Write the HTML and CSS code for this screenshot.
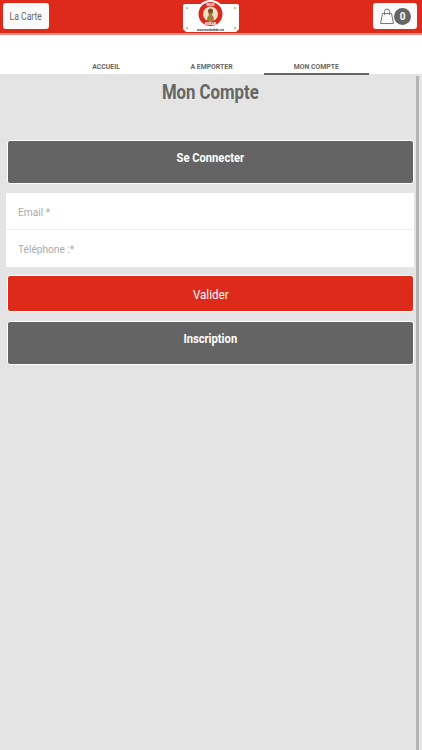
FILE: index.html
```html
<!DOCTYPE html>
<html lang="fr">
<head>
<meta charset="utf-8">
<title>Mon Compte</title>
<link rel="stylesheet" href="styles.css">
</head>
<body>
<header class="topbar">
  <a class="carte-btn"><span class="narrow">La Carte</span></a>
  <div class="logo">
    <svg width="58" height="33" viewBox="0 0 58 33">
      <path d="M3 4h52a2 2 0 0 1 2 2v23l-3 3H4l-3-3V6a2 2 0 0 1 2-2z" fill="#fff"/>
      <circle cx="28.500" cy="14" r="14" fill="#fff"/>
      <circle cx="28.500" cy="14" r="12" fill="#d9281c"/>
      <circle cx="28.500" cy="14" r="7.500" fill="#f1dfc4"/>
      <path d="M25 21c0-4 1-5 2-6-1-2 0-6 1.500-6s2.500 4 1.500 6c1 1 2 2 2 6z" fill="#a9783f"/>
      <circle cx="28.500" cy="11" r="2.500" fill="#7a5126"/>
      <text class="logo-ring" x="28.500" y="6" text-anchor="middle">MON</text>
      <text class="logo-ring" x="28.500" y="25" text-anchor="middle">KEBAB</text>
      <circle cx="5" cy="8" r="1" fill="#d8a040"/><circle cx="53" cy="8" r="1" fill="#d8a040"/>
      <circle cx="5" cy="28" r="1" fill="#d8a040"/><circle cx="53" cy="28" r="1" fill="#d8a040"/>
      <text class="logo-url" x="28.500" y="30.500" text-anchor="middle">www.monkebab.xxx</text>
    </svg>
  </div>
  <a class="cart-btn">
    <svg class="bag" width="14" height="16" viewBox="0 0 14 16" fill="none" stroke="#777" stroke-width="1">
      <path d="M2.500 5.500h9l2 10H.5z"/>
      <path d="M4.500 7V3.500a2.500 2.500 0 0 1 5 0V7"/>
    </svg>
    <span class="count">0</span>
  </a>
</header>
<nav class="tabs">
  <a class="tab"><span class="narrow">ACCUEIL</span></a>
  <a class="tab"><span class="narrow">A EMPORTER</span></a>
  <a class="tab tab-active"><span class="narrow">MON COMPTE</span></a>
</nav>
<main class="content">
  <h1 class="title"><span class="narrow">Mon Compte</span></h1>
  <div class="btn btn-grey btn-tall"><span class="narrow">Se Connecter</span></div>
  <form class="form">
    <div class="field"><span class="narrow">Email *</span></div>
    <div class="field field-last"><span class="narrow">Téléphone :*</span></div>
  </form>
  <div class="btn btn-red"><span class="narrow">Valider</span></div>
  <div class="btn btn-grey btn-tall"><span class="narrow">Inscription</span></div>
  <div class="scrollbar"></div>
</main>
</body>
</html>
```

FILE: styles.css
```css
html, body {
  margin: 0;
  height: 100%;
}
body {
  width: 422px;
  height: 750px;
  overflow: hidden;
  background: #e4e4e4;
  font-family: Roboto, "Liberation Sans", sans-serif;
  display: flex;
  flex-direction: column;
}
.narrow {
  display: inline-block;
  transform: scaleX(0.86);
}
.field .narrow {
  transform-origin: left center;
}
.topbar {
  flex: none;
  background: #dd2a1b;
  border-bottom: 2px solid #ef8d85;
  display: flex;
  align-items: flex-start;
  justify-content: space-between;
  padding: 3px 5px 0 3px;
  height: 30px;
}
.carte-btn {
  width: 46px;
  height: 26px;
  background: #fafafa;
  border-radius: 3px;
  color: #666;
  font-size: 10px;
  display: flex;
  align-items: center;
  justify-content: center;
}
.logo {
  width: 58px;
  height: 33px;
  margin-top: -3px;
}
.logo-url {
  font-size: 3px;
  font-weight: 700;
  fill: #333;
}
.logo-ring {
  font-size: 3.500px;
  font-weight: 700;
  fill: #fff;
}
.cart-btn {
  width: 44px;
  height: 26px;
  background: #fafafa;
  border-radius: 3px;
  display: flex;
  align-items: center;
  padding-left: 7px;
  box-sizing: border-box;
}
.bag {
  flex: none;
}
.count {
  width: 17px;
  height: 17px;
  border-radius: 50%;
  background: #666;
  color: #fff;
  font-size: 10px;
  font-weight: 700;
  display: flex;
  align-items: center;
  justify-content: center;
}
.tabs {
  flex: none;
  height: 39px;
  background: #fff;
  display: grid;
  grid-template-columns: 105px 105px 105px;
  padding-left: 54px;
  align-items: end;
  box-sizing: border-box;
}
.tab {
  height: 14px;
  color: #666;
  font-size: 8px;
  font-weight: 700;
  text-align: center;
  line-height: 14px;
}
.tab-active {
  height: 13px;
  border-bottom: 2px solid #666;
  margin-bottom: -1px;
}
.content {
  flex: 1;
  position: relative;
  padding: 0 8px 0 7px;
}
.title {
  margin: 7px 0 35px;
  color: #666;
  font-size: 19.500px;
  font-weight: 700;
  line-height: 24px;
  text-align: center;
}
.btn {
  border: 1px solid #fff;
  border-radius: 3px;
  color: #fff;
  text-align: center;
  font-size: 13.500px;
}
.btn-grey {
  background: #646464;
  font-size: 13px;
  font-weight: 700;
}
.btn-tall {
  height: 42px;
  line-height: 33px;
}
.btn-red {
  background: #dd2a1b;
  height: 35px;
  line-height: 37px;
  margin-bottom: 9px;
}
.form {
  margin: 9px 0 8px -1px;
  background: #fff;
  width: 408px;
}
.field {
  height: 36px;
  line-height: 38px;
  padding-left: 12px;
  color: #aaa;
  font-size: 11.800px;
  border-bottom: 1px solid #eee;
}
.field-last {
  height: 37px;
  border-bottom: 0;
}
.scrollbar {
  position: absolute;
  top: 2px;
  bottom: 0;
  right: 3px;
  width: 3px;
  background: #b4b4b4;
}
```
